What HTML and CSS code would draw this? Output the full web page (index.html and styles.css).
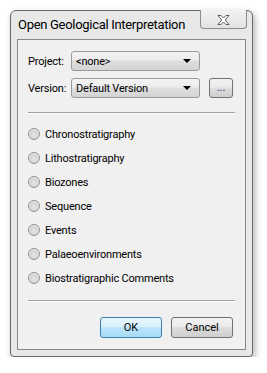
FILE: index.html
```
<!DOCTYPE html>
<html>
<head>
    <title>Open Geological Interpretation</title>
    <link rel="stylesheet" href="styles.css">
</head>
<body>
    <div class="window">
        <div class="titlebar">
            <span class="title">Open Geological Interpretation</span>
            <div class="close">
                <svg width="13" height="10" viewBox="0 0 13 10">
                    <polygon points="1,0.5 4,0.5 6.5,3 9,0.5 12,0.5 8.2,5 12,9.5 9,9.5 6.5,7 4,9.5 1,9.5 4.8,5" fill="#fff" stroke="#5a5a5a" stroke-width="1" stroke-linejoin="round"/>
                </svg>
            </div>
        </div>

        <div class="client">
            <div class="form-group">
                <label>Project:</label>
                <div class="combo"><span>&lt;none&gt;</span><i class="arrow"></i></div>
            </div>
            <div class="form-group">
                <label>Version:</label>
                <div class="combo"><span>Default Version</span><i class="arrow"></i></div>
                <button class="btn dots">...</button>
            </div>

            <hr class="sep top">

            <div class="radios">
                <div class="radio"><i class="dot"></i>Chronostratigraphy</div>
                <div class="radio"><i class="dot"></i>Lithostratigraphy</div>
                <div class="radio"><i class="dot"></i>Biozones</div>
                <div class="radio"><i class="dot"></i>Sequence</div>
                <div class="radio"><i class="dot"></i>Events</div>
                <div class="radio"><i class="dot"></i>Palaeoenvironments</div>
                <div class="radio"><i class="dot"></i>Biostratigraphic Comments</div>
            </div>

            <hr class="sep">

            <div class="buttons">
                <button class="btn ok">OK</button>
                <button class="btn">Cancel</button>
            </div>
        </div>
    </div>
</body>
</html>
```
FILE: styles.css
```
body { margin: 0; background: #fff; font-family: Roboto, "Liberation Sans", sans-serif; font-size: 11px; letter-spacing: -0.2px; color: #000; }
.window { margin: 10px 0 0 10px; width: 243px; height: 347px; box-sizing: border-box; border: 1px solid #6a6a6a; border-radius: 6px 6px 4px 4px; background: #e8e8e8; padding: 0 6px 6px 6px; display: flex; flex-direction: column; box-shadow: 2px 3px 7px rgba(0,0,0,0.3); }
.titlebar { height: 28px; flex-shrink: 0; display: flex; align-items: flex-start; }
.title { font-size: 13px; letter-spacing: -0.3px; margin: 6px 0 0 1px; color: #000; }
.close { margin: -1px -1px 0 auto; width: 47px; height: 19px; box-sizing: border-box; border: 1px solid #8c8c8c; border-top: none; border-radius: 0 0 4px 4px; background: linear-gradient(#f2f2f2, #e2e2e2); display: flex; align-items: center; justify-content: center; }
.close svg { margin-top: 1px; }
.client { flex: 1; min-height: 0; border: 1px solid #888; background: #f0f0f0; padding: 11px 10px 11px 10px; display: flex; flex-direction: column; }
.form-group { display: flex; align-items: center; height: 20px; flex-shrink: 0; }
.form-group + .form-group { margin-top: 7px; }
label { width: 43px; }
.combo { width: 129px; height: 20px; box-sizing: border-box; border: 1px solid #9a9a9a; border-radius: 3px; background: linear-gradient(#f3f3f3 0%, #ececec 45%, #dedede 50%, #d4d4d4 100%); display: flex; align-items: center; padding: 0 6px 0 4px; }
.combo span { flex: 1; }
.arrow { width: 0; height: 0; border-left: 4px solid transparent; border-right: 4px solid transparent; border-top: 4px solid #000; margin-right: 2px; }
.btn { font: inherit; color: #000; height: 20px; box-sizing: border-box; border: 1px solid #707070; border-radius: 3px; background: linear-gradient(#f2f2f2 0%, #ebebeb 45%, #dddddd 50%, #cfcfcf 100%); padding: 0; }
.dots { width: 24px; margin-left: 9px; color: #1a1a8c; line-height: 14px; }
.sep { border: none; border-top: 1px solid #a0a0a0; border-bottom: 1px solid #fff; margin: 10px 0 0 0; height: 0; flex-shrink: 0; }
.sep.top { margin-top: 14px; }
.radios { margin-top: 8px; flex-shrink: 0; }
.radio { height: 24px; display: flex; align-items: center; }
.dot { width: 10px; height: 10px; border: 1px solid #8f8f8f; border-radius: 50%; margin-right: 5px; background: radial-gradient(circle at 50% 60%, #e6e6e6 0%, #d6d6d6 45%, #f4f4f4 100%); }
.buttons { display: flex; justify-content: flex-end; gap: 9px; margin: 15px 2px 0 0; }
.buttons .btn { width: 62px; height: 21px; }
.ok { border-color: #3c7fb1; background: linear-gradient(#eaf6fd 0%, #d9f0fc 45%, #bee6fd 50%, #a7d9f5 100%); }
```
